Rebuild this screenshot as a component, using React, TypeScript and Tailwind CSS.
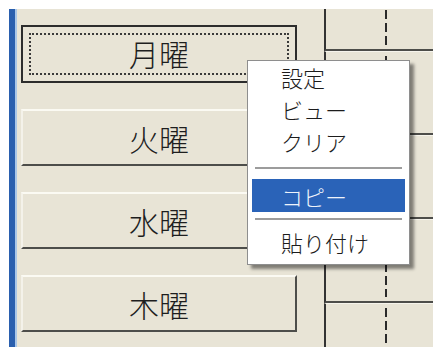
import React from 'react';

const days = ['月曜', '火曜', '水曜', '木曜'];

function DayButton({ label, focused }: { label: string; focused?: boolean }) {
    if (focused) {
        return (
            <div className="w-[276px] h-[58px] border-2 border-[#2c2c2c] bg-[#e8e4d6] p-[6px]">
                <div className="h-full border-2 border-dotted border-[#3a3a3a] flex items-center justify-center pb-[3px]">
                    <span className="text-[30px] leading-none font-light text-[#1e1e1e]">{label}</span>
                </div>
            </div>
        );
    }

    return (
        <div className="w-[276px] h-[57px] border-2 border-t-[#fbfaf3] border-l-[#f4f2ea] border-r-[#4d4d4a] border-b-[#4d4d4a] bg-[#e8e4d6] flex items-center justify-center">
            <span className="text-[30px] leading-none font-light text-[#1e1e1e]">{label}</span>
        </div>
    );
}

function RightCell({ first }: { first?: boolean }) {
    return (
        <div
            className={
                first
                    ? 'h-[42px] shrink-0 border-l-2 border-b-2 border-l-[#333] border-b-[#4d4d4a] pl-[59px] pt-[1px] pb-[4px]'
                    : 'h-[84px] shrink-0 border-t border-l-2 border-b-2 border-t-[#f6f4ec] border-l-[#333] border-b-[#4d4d4a] pl-[59px] pt-[4px] pb-[4px]'
            }
        >
            <div className="w-[2px] h-full bg-[repeating-linear-gradient(to_bottom,#2a2a2a_0_9px,transparent_9px_13px)]"></div>
        </div>
    );
}

export default function App() {
    return (
        <div className="relative w-[433px] h-[347px] overflow-hidden bg-white pt-[9px] pl-[9px] font-['Noto_Sans_CJK_JP',sans-serif]">
            <div className="flex h-full">
                <div className="w-[6px] bg-[#2a5fae]"></div>
                <div className="w-[2px] bg-[#a9c6e8]"></div>

                <div className="flex flex-1 bg-[#e8e4d6]">
                    <div className="w-[280px] shrink-0 flex flex-col gap-[26px] pl-[4px] pt-[16px]">
                        {days.map((d, i) => (
                            <DayButton key={d} label={d} focused={i === 0} />
                        ))}
                    </div>

                    <div className="flex-1 ml-[27px] flex flex-col overflow-hidden">
                        <RightCell first />
                        <RightCell />
                        <RightCell />
                        <RightCell />
                        <RightCell />
                    </div>
                </div>
            </div>

            {/* context menu */}
            <div className="absolute left-[247px] top-[60px] w-[163px] h-[205px] bg-white border border-[#8e8e8e] shadow-[4px_4px_3px_rgba(0,0,0,0.45)] flex flex-col font-light">
                <div className="h-[32px] flex items-center pl-[33px] text-[22px] leading-none text-[#1c1c1c]">設定</div>
                <div className="h-[32px] flex items-center pl-[33px] text-[22px] leading-none text-[#1c1c1c]">ビュー</div>
                <div className="h-[32px] flex items-center pl-[33px] text-[22px] leading-none text-[#1c1c1c]">クリア</div>
                <div className="h-[22px] flex items-center px-[7px]">
                    <div className="w-full h-[2px] bg-[#9c9c9c]"></div>
                </div>
                <div className="h-[33px] mx-[4px] bg-[#2a63b8] flex items-center pl-[29px] text-[22px] leading-none text-[#eef3fb]">コピー</div>
                <div className="h-[14px] flex items-center px-[7px]">
                    <div className="w-full h-[2px] bg-[#9c9c9c]"></div>
                </div>
                <div className="h-[32px] flex items-center pl-[33px] text-[22px] leading-none text-[#1c1c1c]">貼り付け</div>
            </div>
        </div>
    );
}
